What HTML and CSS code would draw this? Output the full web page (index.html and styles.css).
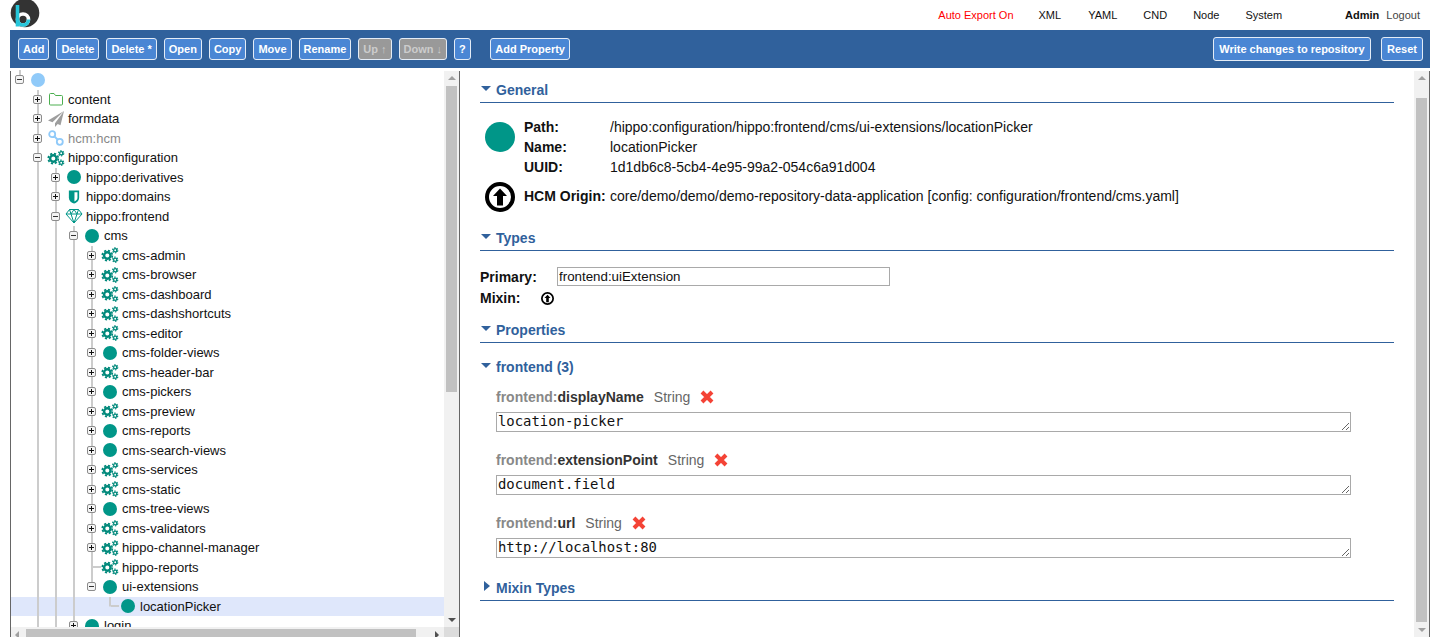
FILE: index.html
```html
<!DOCTYPE html>
<html lang="en">
<head>
<meta charset="utf-8">
<title>Console</title>
<link rel="stylesheet" href="styles.css">
</head>
<body>
<svg class="defs" width="0" height="0" aria-hidden="true">
  <symbol id="plus" viewBox="0 0 9 9"><rect x=".5" y=".5" width="8" height="8" rx="1.5" fill="#f4f4f4" stroke="#8c8c8c"/><path d="M2 4.500h5M4.500 2v5" stroke="#111"/></symbol>
  <symbol id="minus" viewBox="0 0 9 9"><rect x=".5" y=".5" width="8" height="8" rx="1.5" fill="#f4f4f4" stroke="#8c8c8c"/><path d="M2 4.500h5" stroke="#333"/></symbol>
  <symbol id="folder" viewBox="0 0 16 14"><path d="M1.500 2.500a1 1 0 0 1 1-1h3.500l1.500 2h6a1 1 0 0 1 1 1v7.500a1 1 0 0 1-1 1h-11a1 1 0 0 1-1-1z" fill="#fff" stroke="#4caf50"/></symbol>
  <symbol id="plane" viewBox="0 0 16 16"><path d="M16 0 0 9.500l4.500 1.800L16 0 7 12.300V16l2.700-3 2.800 1.200z" fill="#9e9e9e"/></symbol>
  <symbol id="link" viewBox="0 0 16 16"><g fill="none" stroke="#90caf9" stroke-width="1.800"><circle cx="4.200" cy="4.200" r="3"/><circle cx="11.800" cy="11.800" r="3"/><path d="m6 6 4 4"/></g></symbol>
  <symbol id="cogs" viewBox="0 0 18 16"><g fill="none" stroke="#00897b"><circle cx="6.300" cy="8.500" r="3.200" stroke-width="2.400"/><circle cx="6.300" cy="8.500" r="5" stroke-width="1.800" stroke-dasharray="2.200 1.730"/><circle cx="14.200" cy="3.300" r="1.600" stroke-width="1.300"/><circle cx="14.200" cy="3.300" r="2.600" stroke-width="1.100" stroke-dasharray="1.500 1.220"/><circle cx="14.200" cy="12.700" r="1.600" stroke-width="1.300"/><circle cx="14.200" cy="12.700" r="2.600" stroke-width="1.100" stroke-dasharray="1.500 1.220"/></g></symbol>
  <symbol id="shield" viewBox="0 0 12 15"><path d="M.5.500h11V8c0 3.500-2.500 5.500-5.500 6.500C3 13.500.5 11.500.5 8z" fill="#009688"/><path d="M6.500 2.500h3.200V8c0 2.200-1.400 3.500-3.200 4.300z" fill="#fff"/></symbol>
  <symbol id="gem" viewBox="0 0 18 16"><path d="M4.500 1.500h9l3.500 4.500-8 9-8-9zM1 6h16M6 6l3 9 3-9M4.500 1.500 6 6l3-4.500L12 6l1.500-4.500" fill="none" stroke="#009688"/></symbol>
  <symbol id="origin" viewBox="0 0 30 30"><circle cx="15" cy="15" r="13" fill="#fff" stroke="#000" stroke-width="4"/><path d="M15 6.500 22 14h-4v9.500h-6V14H8z" fill="#000"/></symbol>
  <symbol id="cross" viewBox="0 0 14 14"><path d="m2 2 10 10M12 2 2 12" stroke="#f44336" stroke-width="4"/></symbol>
</svg>

<header class="top">
  <svg class="logo" viewBox="0 0 30 30" aria-label="logo"><circle cx="15" cy="13" r="14.300" fill="#333"/><circle cx="13" cy="19.500" r="5.500" fill="none" stroke="#fff" stroke-width="3.600"/><path d="M7.500 19.500a5.500 5.500 0 0 0 11 0" fill="none" stroke="#26c6da" stroke-width="3.600"/><path d="M5.700 5h3.600v21.500H5.700z" fill="#26c6da"/></svg>
  <nav class="nav">
    <a class="nav-alert">Auto Export On</a>
    <a class="nav-xml">XML</a><a>YAML</a><a>CND</a><a>Node</a><a>System</a>
  </nav>
  <div class="user"><b>Admin</b><a>Logout</a></div>
</header>

<div class="bar">
  <button class="btn">Add</button>
  <button class="btn">Delete</button>
  <button class="btn">Delete *</button>
  <button class="btn">Open</button>
  <button class="btn">Copy</button>
  <button class="btn">Move</button>
  <button class="btn">Rename</button>
  <button class="btn off">Up ↑</button>
  <button class="btn off">Down ↓</button>
  <button class="btn">?</button>
  <button class="btn add-prop">Add Property</button>
  <button class="btn tall push">Write changes to repository</button>
  <button class="btn tall reset">Reset</button>
</div>

<main class="main">
  <section class="left">
    <div class="left-top">
      <div class="tree">
        <div class="row"><span class="c top-stub"><svg class="ex"><use href="#minus"/></svg></span><span class="ic"><i class="dot sky"></i></span></div>
        <div class="row"><span class="c"></span><span class="c v"><svg class="ex"><use href="#plus"/></svg></span><span class="ic"><svg class="i16"><use href="#folder"/></svg></span><span>content</span></div>
        <div class="row"><span class="c"></span><span class="c v"><svg class="ex"><use href="#plus"/></svg></span><span class="ic"><svg class="i16"><use href="#plane"/></svg></span><span>formdata</span></div>
        <div class="row"><span class="c"></span><span class="c v"><svg class="ex"><use href="#plus"/></svg></span><span class="ic"><svg class="i16"><use href="#link"/></svg></span><span class="muted">hcm:hcm</span></div>
        <div class="row"><span class="c"></span><span class="c v"><svg class="ex"><use href="#minus"/></svg></span><span class="ic"><svg class="i18"><use href="#cogs"/></svg></span><span>hippo:configuration</span></div>
        <div class="row"><span class="c"></span><span class="c v"></span><span class="c v"><svg class="ex"><use href="#plus"/></svg></span><span class="ic"><i class="dot"></i></span><span>hippo:derivatives</span></div>
        <div class="row"><span class="c"></span><span class="c v"></span><span class="c v"><svg class="ex"><use href="#plus"/></svg></span><span class="ic"><svg class="i14"><use href="#shield"/></svg></span><span>hippo:domains</span></div>
        <div class="row"><span class="c"></span><span class="c v"></span><span class="c v"><svg class="ex"><use href="#minus"/></svg></span><span class="ic"><svg class="i18"><use href="#gem"/></svg></span><span>hippo:frontend</span></div>
        <div class="row"><span class="c"></span><span class="c v"></span><span class="c v"></span><span class="c v"><svg class="ex"><use href="#minus"/></svg></span><span class="ic"><i class="dot"></i></span><span>cms</span></div>
        <div class="row"><span class="c"></span><span class="c v"></span><span class="c v"></span><span class="c v"></span><span class="c v"><svg class="ex"><use href="#plus"/></svg></span><span class="ic"><svg class="i18"><use href="#cogs"/></svg></span><span>cms-admin</span></div>
        <div class="row"><span class="c"></span><span class="c v"></span><span class="c v"></span><span class="c v"></span><span class="c v"><svg class="ex"><use href="#plus"/></svg></span><span class="ic"><svg class="i18"><use href="#cogs"/></svg></span><span>cms-browser</span></div>
        <div class="row"><span class="c"></span><span class="c v"></span><span class="c v"></span><span class="c v"></span><span class="c v"><svg class="ex"><use href="#plus"/></svg></span><span class="ic"><svg class="i18"><use href="#cogs"/></svg></span><span>cms-dashboard</span></div>
        <div class="row"><span class="c"></span><span class="c v"></span><span class="c v"></span><span class="c v"></span><span class="c v"><svg class="ex"><use href="#plus"/></svg></span><span class="ic"><svg class="i18"><use href="#cogs"/></svg></span><span>cms-dashshortcuts</span></div>
        <div class="row"><span class="c"></span><span class="c v"></span><span class="c v"></span><span class="c v"></span><span class="c v"><svg class="ex"><use href="#plus"/></svg></span><span class="ic"><svg class="i18"><use href="#cogs"/></svg></span><span>cms-editor</span></div>
        <div class="row"><span class="c"></span><span class="c v"></span><span class="c v"></span><span class="c v"></span><span class="c v"><svg class="ex"><use href="#plus"/></svg></span><span class="ic"><i class="dot"></i></span><span>cms-folder-views</span></div>
        <div class="row"><span class="c"></span><span class="c v"></span><span class="c v"></span><span class="c v"></span><span class="c v"><svg class="ex"><use href="#plus"/></svg></span><span class="ic"><svg class="i18"><use href="#cogs"/></svg></span><span>cms-header-bar</span></div>
        <div class="row"><span class="c"></span><span class="c v"></span><span class="c v"></span><span class="c v"></span><span class="c v"><svg class="ex"><use href="#plus"/></svg></span><span class="ic"><i class="dot"></i></span><span>cms-pickers</span></div>
        <div class="row"><span class="c"></span><span class="c v"></span><span class="c v"></span><span class="c v"></span><span class="c v"><svg class="ex"><use href="#plus"/></svg></span><span class="ic"><svg class="i18"><use href="#cogs"/></svg></span><span>cms-preview</span></div>
        <div class="row"><span class="c"></span><span class="c v"></span><span class="c v"></span><span class="c v"></span><span class="c v"><svg class="ex"><use href="#plus"/></svg></span><span class="ic"><i class="dot"></i></span><span>cms-reports</span></div>
        <div class="row"><span class="c"></span><span class="c v"></span><span class="c v"></span><span class="c v"></span><span class="c v"><svg class="ex"><use href="#plus"/></svg></span><span class="ic"><i class="dot"></i></span><span>cms-search-views</span></div>
        <div class="row"><span class="c"></span><span class="c v"></span><span class="c v"></span><span class="c v"></span><span class="c v"><svg class="ex"><use href="#plus"/></svg></span><span class="ic"><svg class="i18"><use href="#cogs"/></svg></span><span>cms-services</span></div>
        <div class="row"><span class="c"></span><span class="c v"></span><span class="c v"></span><span class="c v"></span><span class="c v"><svg class="ex"><use href="#plus"/></svg></span><span class="ic"><svg class="i18"><use href="#cogs"/></svg></span><span>cms-static</span></div>
        <div class="row"><span class="c"></span><span class="c v"></span><span class="c v"></span><span class="c v"></span><span class="c v"><svg class="ex"><use href="#plus"/></svg></span><span class="ic"><i class="dot"></i></span><span>cms-tree-views</span></div>
        <div class="row"><span class="c"></span><span class="c v"></span><span class="c v"></span><span class="c v"></span><span class="c v"><svg class="ex"><use href="#plus"/></svg></span><span class="ic"><svg class="i18"><use href="#cogs"/></svg></span><span>cms-validators</span></div>
        <div class="row"><span class="c"></span><span class="c v"></span><span class="c v"></span><span class="c v"></span><span class="c v"><svg class="ex"><use href="#plus"/></svg></span><span class="ic"><svg class="i18"><use href="#cogs"/></svg></span><span>hippo-channel-manager</span></div>
        <div class="row"><span class="c"></span><span class="c v"></span><span class="c v"></span><span class="c v"></span><span class="c v tee"></span><span class="ic"><svg class="i18"><use href="#cogs"/></svg></span><span>hippo-reports</span></div>
        <div class="row"><span class="c"></span><span class="c v"></span><span class="c v"></span><span class="c v"></span><span class="c v-top"><svg class="ex"><use href="#minus"/></svg></span><span class="ic"><i class="dot"></i></span><span>ui-extensions</span></div>
        <div class="row sel"><span class="c"></span><span class="c v"></span><span class="c v"></span><span class="c v"></span><span class="c"></span><span class="c ell"></span><span class="ic"><i class="dot"></i></span><span>locationPicker</span></div>
        <div class="row"><span class="c"></span><span class="c v"></span><span class="c v"></span><span class="c v"><svg class="ex"><use href="#plus"/></svg></span><span class="ic"><i class="dot"></i></span><span>login</span></div>
      </div>
      <div class="vbar tree-v">
        <span class="arr up"></span><span class="gap-a"></span><span class="thumb tree-thumb"></span><span class="fill"></span><span class="arr down"></span>
      </div>
    </div>
    <div class="hbar">
      <span class="harr lt"></span><span class="hthumb"></span><span class="fill"></span><span class="harr rt"></span><span class="corner"></span>
    </div>
  </section>

  <section class="right">
    <div class="content">
      <h2 class="sec first"><i class="tri"></i>General</h2>
      <div class="info">
        <span class="info-ic"><i class="dot big"></i></span>
        <b>Path:</b><span>/hippo:configuration/hippo:frontend/cms/ui-extensions/locationPicker</span>
        <b>Name:</b><span>locationPicker</span>
        <b>UUID:</b><span>1d1db6c8-5cb4-4e95-99a2-054c6a91d004</span>
      </div>
      <div class="info hcm">
        <svg class="i30"><use href="#origin"/></svg>
        <b>HCM Origin:</b><span>core/demo/demo/demo-repository-data-application [config: configuration/frontend/cms.yaml]</span>
      </div>

      <h2 class="sec types"><i class="tri"></i>Types</h2>
      <div class="prim"><b>Primary:</b><input class="prim-in" type="text" value="frontend:uiExtension"></div>
      <div class="mixin"><b>Mixin:</b><svg class="i13"><use href="#origin"/></svg></div>

      <h2 class="sec props"><i class="tri"></i>Properties</h2>
      <h3 class="sub"><i class="tri"></i>frontend (3)</h3>

      <div class="prop first-prop"><span class="ns">frontend:</span><b>displayName</b><span class="ty">String</span><svg class="i14"><use href="#cross"/></svg></div>
      <textarea class="val" spellcheck="false">location-picker</textarea>
      <div class="prop"><span class="ns">frontend:</span><b>extensionPoint</b><span class="ty">String</span><svg class="i14"><use href="#cross"/></svg></div>
      <textarea class="val" spellcheck="false">document.field</textarea>
      <div class="prop"><span class="ns">frontend:</span><b>url</b><span class="ty">String</span><svg class="i14"><use href="#cross"/></svg></div>
      <textarea class="val" spellcheck="false">http://localhost:80</textarea>

      <h2 class="sec mix"><i class="tri side"></i>Mixin Types</h2>
    </div>
    <div class="vbar page-v">
      <span class="arr up"></span><span class="gap-b"></span><span class="thumb page-thumb"></span><span class="fill"></span><span class="arr down pale"></span>
    </div>
  </section>
</main>
</body>
</html>
```
FILE: styles.css
```css
* { box-sizing: border-box; }
html, body { margin: 0; height: 637px; overflow: hidden; }
body { font-family: "Liberation Sans", Arial, sans-serif; font-size: 14px; color: #111; background: #fff; }
.defs { display: block; height: 0; }
.top { display: flex; align-items: center; height: 30px; padding: 0 19px 0 10px; font-size: 11px; }
.logo { width: 30px; height: 30px; flex: none; }
.nav { display: flex; gap: 26px; margin-left: auto; }
.nav-alert { color: #f00; margin-right: -1px; }
.nav-xml { margin-right: 1px; }
.user { display: flex; gap: 7px; margin-left: 63px; }
.user a { color: #444; }
.bar { display: flex; align-items: center; gap: 7px; height: 38px; margin: 0 9px 0 10px; padding: 0 7px 0 8px; background: #30619c; }
.btn { height: 22px; padding: 0 4px; border: 1px solid #e4ecf6; border-radius: 3px; background: #4a86d4; color: #fff; font: bold 11px "Liberation Sans", Arial, sans-serif; white-space: nowrap; }
.off { background: #999; color: #ccc; }
.add-prop { margin-left: 12px; padding: 0 4.5px; }
.tall { height: 24px; padding: 0 5px; }
.push { margin-left: auto; padding: 0 5.5px; }
.reset { margin-left: 3px; }
.main { display: flex; height: 571px; margin: 3px 9px 0 10px; }
.left { display: flex; flex-direction: column; flex: none; width: 450px; height: 571px; border-left: 1px solid #666; border-right: 1px solid #666; }
.left-top { display: flex; height: 556px; }
.tree { flex: 1; min-width: 0; margin: -1px 0 0; padding-top: 0; overflow: hidden; font-size: 13px; }
.row { display: flex; align-items: center; height: 19.5px; white-space: nowrap; }
.sel { background: #dfe7fb; }
.c { display: flex; flex: none; align-items: center; width: 18px; height: 100%; }
.v, .tee { background: linear-gradient(#ccc, #ccc) 8px 0 / 2px 100% no-repeat; }
.tee { background: linear-gradient(#ccc, #ccc) 8px 0 / 2px 100% no-repeat, linear-gradient(#ccc, #ccc) 10px 50% / 8px 2px no-repeat; }
.v-top { display: flex; flex: none; align-items: center; width: 18px; height: 100%; background: linear-gradient(#ccc, #ccc) 8px 0 / 2px 50% no-repeat; }
.top-stub { background: linear-gradient(#ccc, #ccc) 8px 0 / 2px 50% no-repeat; }
.ell { background: linear-gradient(#ccc, #ccc) 8px 0 / 2px 50% no-repeat, linear-gradient(#ccc, #ccc) 10px 50% / 8px 2px no-repeat; }
.ex { display: block; width: 9px; height: 9px; margin-left: 4px; }
.ic { display: flex; flex: none; align-items: center; justify-content: center; width: 18px; margin-right: 3px; }
.dot { display: block; width: 14px; height: 14px; border-radius: 50%; background: #009688; }
.sky { background: #90caf9; }
.big { width: 30px; height: 30px; }
.muted { color: #888; }
.i13 { width: 13px; height: 13px; }
.i14 { width: 14px; height: 14px; }
.i16 { width: 16px; height: 16px; }
.i18 { width: 18px; height: 16px; }
.i30 { width: 30px; height: 30px; }
.vbar { display: flex; flex: none; flex-direction: column; align-items: center; width: 15px; height: 100%; background: #f1f1f1; }
.arr { flex: none; width: 0; height: 0; margin: 5px 0; border-left: 4px solid transparent; border-right: 4px solid transparent; }
.up { border-bottom: 4px solid #a0a0a0; }
.down { border-top: 4px solid #505050; }
.pale { border-top-color: #a0a0a0; }
.thumb { flex: none; width: 11px; background: #c1c1c1; }
.gap-a { flex: none; height: 1px; }
.tree-thumb { height: 306px; }
.gap-b { flex: none; height: 13px; }
.page-thumb { height: 524px; }
.fill { flex: 1; }
.hbar { display: flex; align-items: center; height: 15px; background: #f1f1f1; }
.harr { flex: none; width: 0; height: 0; border-top: 4px solid transparent; border-bottom: 4px solid transparent; }
.lt { margin: 0 7px 0 4px; border-right: 4px solid #a0a0a0; }
.rt { margin: 0 5px 0 5px; border-left: 4px solid #505050; }
.hthumb { flex: none; width: 390px; height: 11px; background: #c1c1c1; }
.corner { flex: none; width: 15px; height: 15px; background: #dcdcdc; }
.right { display: flex; flex: 1; min-width: 0; height: 566px; border-right: 1px solid #666; }
.content { flex: 1; min-width: 0; padding: 0 20px; }
.sec { display: flex; align-items: center; gap: 5px; height: 23px; margin: 0; padding: 0 0 2px 1px; border-bottom: 1px solid #30619c; color: #30619c; font-size: 14px; font-weight: bold; }
.sub { display: flex; align-items: center; gap: 5px; height: 20px; margin: 14px 0 0; padding-left: 1px; color: #30619c; font-size: 14px; font-weight: bold; }
.tri { flex: none; width: 0; height: 0; margin-bottom: 4px; border-left: 5px solid transparent; border-right: 5px solid transparent; border-top: 5px solid #30619c; }
.side { margin: 0 1px 4px 3px; border-top: 5px solid transparent; border-bottom: 5px solid transparent; border-left: 6px solid #30619c; border-right: 0; }
.first { margin-top: 9px; }
.types { margin-top: 16px; }
.props { margin-top: 12px; }
.mix { margin-top: 20px; }
.info { display: grid; grid-template-columns: 39px 86px 1fr; grid-auto-rows: 20px; align-items: center; margin-top: 14px; padding-left: 5px; }
.info b:nth-of-type(n+2), .info b ~ span ~ b { grid-column: 2; }
.info-ic { grid-row: 1 / span 2; display: flex; align-items: center; }
.hcm { grid-auto-rows: 30px; margin-top: 5px; }
.hcm b, .hcm span { margin-bottom: 2px; }
.prim { display: flex; align-items: center; height: 19px; margin-top: 16px; }
.prim b { width: 77px; }
.prim-in { width: 333px; height: 19px; padding: 0 1px; border: 1px solid #a9a9a9; font: 13.33px "Liberation Sans", Arial, sans-serif; color: #111; }
.mixin { display: flex; align-items: center; height: 20px; margin-top: 2px; }
.mixin b { width: 61px; }
.prop { display: flex; align-items: center; height: 20px; margin: 18px 0 0 16px; }
.first-prop { margin-top: 10px; }
.ns { color: #888; font-weight: bold; }
.prop b { color: #333; }
.ty { margin: 0 10px; color: #666; }
.val { display: block; width: 855px; height: 20px; margin: 5px 0 0 16px; padding: 0 1px; border: 1px solid #a9a9a9; font: 13.9px "DejaVu Sans Mono", monospace; color: #111; resize: both; outline: 0; }
.page-v { height: 100%; }
```
